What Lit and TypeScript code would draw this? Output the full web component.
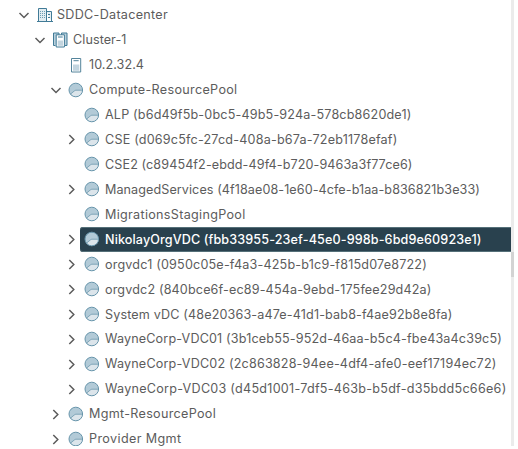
import { LitElement, html, css, svg, nothing } from "lit";
import { customElement, property } from "lit/decorators.js";
import { classMap } from "lit/directives/class-map.js";

type Kind = "datacenter" | "cluster" | "host" | "pool";
interface Node {
  label: string;
  level: number;
  kind: Kind;
  width: number;
  state?: "open" | "closed";
  selected?: boolean;
}

const NODES: Node[] = [
  { label: "SDDC-Datacenter", level: 0, kind: "datacenter", width: 111, state: "open" },
  { label: "Cluster-1", level: 1, kind: "cluster", width: 53.5, state: "open" },
  { label: "10.2.32.4", level: 2, kind: "host", width: 55 },
  { label: "Compute-ResourcePool", level: 2, kind: "pool", width: 148.5, state: "open" },
  { label: "ALP (b6d49f5b-0bc5-49b5-924a-578cb8620de1)", level: 3, kind: "pool", width: 306.5 },
  { label: "CSE (d069c5fc-27cd-408a-b67a-72eb1178efaf)", level: 3, kind: "pool", width: 292.5, state: "closed" },
  { label: "CSE2 (c89454f2-ebdd-49f4-b720-9463a3f77ce6)", level: 3, kind: "pool", width: 307.5 },
  { label: "ManagedServices (4f18ae08-1e60-4cfe-b1aa-b836821b3e33)", level: 3, kind: "pool", width: 375, state: "closed" },
  { label: "MigrationsStagingPool", level: 3, kind: "pool", width: 140.5 },
  { label: "NikolayOrgVDC (fbb33955-23ef-45e0-998b-6bd9e60923e1)", level: 3, kind: "pool", width: 376.5, state: "closed", selected: true },
  { label: "orgvdc1 (0950c05e-f4a3-425b-b1c9-f815d07e8722)", level: 3, kind: "pool", width: 322, state: "closed" },
  { label: "orgvdc2 (840bce6f-ec89-454a-9ebd-175fee29d42a)", level: 3, kind: "pool", width: 326.5, state: "closed" },
  { label: "System vDC (48e20363-a47e-41d1-bab8-f4ae92b8e8fa)", level: 3, kind: "pool", width: 347.5, state: "closed" },
  { label: "WayneCorp-VDC01 (3b1ceb55-952d-46aa-b5c4-fbe43a4c39c5)", level: 3, kind: "pool", width: 397, state: "closed" },
  { label: "WayneCorp-VDC02 (2c863828-94ee-4df4-afe0-eef17194ec72)", level: 3, kind: "pool", width: 391.5, state: "closed" },
  { label: "WayneCorp-VDC03 (d45d1001-7df5-463b-b5df-d35bdd5c66e6)", level: 3, kind: "pool", width: 401.5, state: "closed" },
  { label: "Mgmt-ResourcePool", level: 2, kind: "pool", width: 127, state: "closed" },
  { label: "Provider Mgmt", level: 2, kind: "pool", width: 92.5, state: "closed" },
];

const ICONS = {
  datacenter: svg`
    <path d="M2.5 14.5V1.5H10.5V14.5M10.5 4.5H15.5V14.5" fill="#e3edf2" stroke="#417b97"/>
    <path d="M1 14.5H17" stroke="#417b97"/>
    <path d="M4 4.5H9M4 6.5H9M4 8.5H9M4 10.5H9" stroke="#6d9db3" stroke-dasharray="1 1"/>
    <path d="M12 7.5H14M12 10.5H14" stroke="#417b97"/>`,
  cluster: svg`
    <path d="M3.5 13.5H1.5V1H7V3M9.5 3V1H15V13.5H13" fill="#b9d0dc" stroke="#417b97"/>
    <path d="M4.2 2.8H12.4V15H4.2Z" fill="#fff" stroke="#417b97"/>
    <path d="M6 5H10.7" stroke="#417b97"/>
    <path d="M5.7 8.5H11V13.8H5.7Z" fill="#c3d5df"/>`,
  host: svg`
    <path d="M3.5 1.5H12.7V15H3.5Z" fill="#fff" stroke="#54849b"/>
    <path d="M5.5 3.7H10.7" stroke="#54849b"/>
    <path d="M5 7.5H11.3V13.8H5Z" fill="#c3d5df"/>`,
  pool: svg`
    <circle cx="7.8" cy="8" r="6.8" fill="#b2cad7"/>
    <path d="M2.4 12.2L6.4 8.9Q7.2 8.2 8 8.2H14.6A6.8 6.8 0 0 1 2.4 12.2Z" fill="#dce5eb"/>
    <path d="M2.4 12.2L6.4 8.9Q7.2 8.2 8 8.2H14.5" fill="none" stroke="#7fa5b8"/>
    <circle cx="7.8" cy="8" r="6.8" fill="none" stroke="#6795ab"/>`,
};

@customElement("tree-row")
class TreeRow extends LitElement {
  @property({ attribute: false }) node!: Node;

  static styles = css`
    :host { display: block; flex: 0 0 24.94px; height: 24.94px; }
    .row { display: flex; height: 100%; align-items: center; }
    .toggle { width: 16px; height: 16px; flex: none; fill: none; stroke: #5c5c5c; stroke-width: 1.5; }
    .content {
      display: flex; flex: 1; min-width: 0; height: 100%; box-sizing: border-box;
      padding-left: 4px; align-items: center; white-space: nowrap; color: #5c5c5c;
    }
    .selected { background: #29414e; color: #fff; border-radius: 3px 0 0 3px; font-weight: 500; box-shadow: inset 0 1px #557079, inset 0 -1px #557079; }
    .icon { width: 16px; height: 16px; flex: none; margin-right: 5px; fill: none; overflow: visible; }
  `;

  protected updated() {
    const el = this.renderRoot.querySelector<HTMLElement>(".label")!;
    el.style.letterSpacing = "0px";
    const natural = el.getBoundingClientRect().width;
    el.style.letterSpacing = `${(this.node.width - natural) / this.node.label.length}px`;
  }

  render() {
    const { node } = this;
    return html`<div class="row" style="padding-left:${16 + node.level * 16}px">
      <svg class="toggle" viewBox="0 0 16 16">
        ${node.state
          ? svg`<path d=${node.state === "open" ? "M3.5 6L8 10.5L12.5 6" : "M5.3 4L9.8 8.5L5.3 13"}/>`
          : nothing}
      </svg>
      <div class=${classMap({ content: true, selected: !!node.selected })}>
        <svg class="icon" viewBox="0 0 16 16">${ICONS[node.kind]}</svg>
        <span class="label">${node.label}</span>
      </div>
    </div>`;
  }
}

@customElement("app-root")
class AppRoot extends LitElement {
  static styles = css`
    :host {
      display: flex; height: 449px; overflow: hidden; background: #fff;
      font: 12.6px Inter, "Liberation Sans", sans-serif;
    }
    .tree { display: flex; flex-direction: column; width: 511px; height: 446px; overflow: hidden; padding-top: 2.3px; box-sizing: border-box; }
    .track { width: 3px; height: 446px; background: #ebebeb; padding-top: 252px; box-sizing: border-box; }
    .thumb { height: 25px; background: #d3d3d3; }
  `;

  render() {
    return html`
      <div class="tree">${NODES.map((n) => html`<tree-row .node=${n}></tree-row>`)}</div>
      <div class="track"><div class="thumb"></div></div>`;
  }
}
